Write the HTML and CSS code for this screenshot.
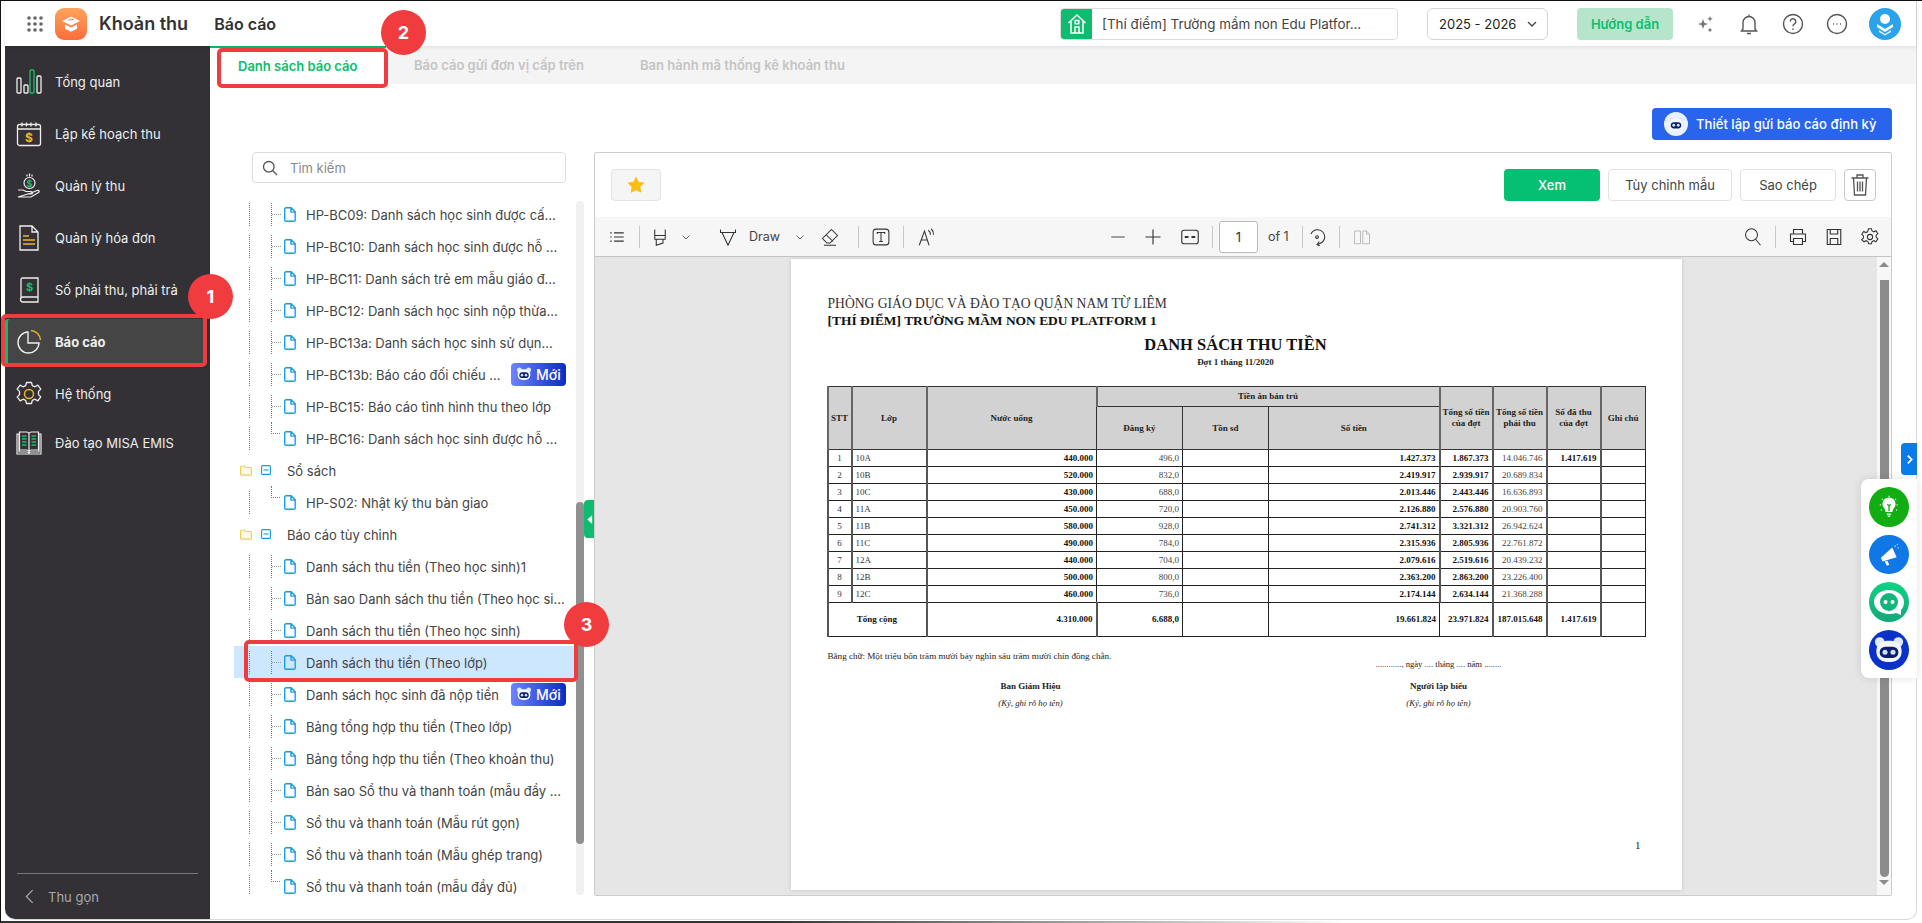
FILE: index.html
```html
<!DOCTYPE html>
<html lang="vi">
<head>
    <meta charset="UTF-8">
    <meta name="viewport" content="width=device-width, initial-scale=1.0">
    <title>Khoản thu - Báo cáo</title>
    <link rel="stylesheet" href="styles.css">
</head>
<body>
<svg class="sprite" width="0" height="0">
    <defs>
        <symbol id="ic-file" viewBox="0 0 12 15">
            <path d="M2 .8h5.2l4 4V13a1.3 1.3 0 0 1-1.3 1.3H2A1.3 1.3 0 0 1 .7 13V2.1A1.3 1.3 0 0 1 2 .8zM7 .8v4.3h4.2" fill="none" stroke="#1a9bea" stroke-width="1.4" stroke-linejoin="round"/>
        </symbol>
        <symbol id="ic-folder" viewBox="0 0 12 11">
            <path d="M.6 2A1 1 0 0 1 1.6 1h2.8l1.3 1.5h4.7a1 1 0 0 1 1 1v5.6a1 1 0 0 1-1 1H1.6a1 1 0 0 1-1-1z" fill="#fff8e6" stroke="#f5c95c" stroke-width="1.1"/>
        </symbol>
        <symbol id="ic-minus" viewBox="0 0 10 10">
            <rect x=".6" y=".6" width="8.8" height="8.8" rx="1" fill="none" stroke="#1a9bea" stroke-width="1.1"/>
            <path d="M2.5 5h5" stroke="#1a9bea" stroke-width="1.1"/>
        </symbol>
        <symbol id="ic-robot" viewBox="0 0 24 24">
            <circle cx="5" cy="6" r="3.6" fill="#dfe8ff"/>
            <circle cx="19" cy="6" r="3.6" fill="#dfe8ff"/>
            <rect x="2.5" y="5" width="19" height="16" rx="7.5" fill="#f2f6ff"/>
            <rect x="5" y="9.5" width="14" height="8.5" rx="4.2" fill="#0d1d6b"/>
            <circle cx="9" cy="13.7" r="1.9" fill="#cfe0ff"/>
            <circle cx="15" cy="13.7" r="1.9" fill="#cfe0ff"/>
        </symbol>
        <symbol id="ic-chev" viewBox="0 0 12 12">
            <path d="M2.5 4.5 6 8l3.5-3.5" fill="none" stroke="#666" stroke-width="1"/>
        </symbol>
    </defs>
</svg>

<div class="frame">
    <div class="app">
        <header class="topbar">
            <svg class="grid-ic" viewBox="0 0 16 16" fill="#666">
                <circle cx="2" cy="2" r="1.8"/><circle cx="8" cy="2" r="1.8"/><circle cx="14" cy="2" r="1.8"/>
                <circle cx="2" cy="8" r="1.8"/><circle cx="8" cy="8" r="1.8"/><circle cx="14" cy="8" r="1.8"/>
                <circle cx="2" cy="14" r="1.8"/><circle cx="8" cy="14" r="1.8"/><circle cx="14" cy="14" r="1.8"/>
            </svg>
            <svg class="logo" viewBox="0 0 32 32">
                <defs>
                    <linearGradient id="logo-grad" x1="0" y1="0" x2="0" y2="1">
                        <stop offset="0" stop-color="#ffa35c"/><stop offset="1" stop-color="#fb6d3a"/>
                    </linearGradient>
                </defs>
                <rect width="32" height="32" rx="9" fill="url(#logo-grad)"/>
                <path d="M16 8.5 25 13l-9 4.5L7 13z" fill="#fff"/>
                <path d="M10 16.5v4.2l6 3 6-3v-4.2l-6 3z" fill="#fff"/>
                <path d="M13.5 12.5l2-1.5 1 1 2-1" stroke="#fb6d3a" stroke-width="1" fill="none"/>
            </svg>
            <span class="app-name">Khoản thu</span>
            <span class="page-name">Báo cáo</span>

            <div class="school">
                <span class="school-ic">
                    <svg viewBox="0 0 20 22" width="20" height="22" fill="none" stroke="#fff" stroke-width="1.5">
                        <path d="M1.5 10 10 2l8.5 8M4 8v12h12V8M8 20v-6h4v6"/><rect x="8.2" y="7.5" width="3.6" height="3.2"/>
                    </svg>
                </span>
                <span class="school-name">[Thí điểm] Trường mầm non Edu Platfor...</span>
            </div>
            <div class="year">2025 - 2026
                <svg viewBox="0 0 12 12" width="12" height="12"><path d="M2 4l4 4 4-4" fill="none" stroke="#444" stroke-width="1.3"/></svg>
            </div>
            <button type="button" class="guide-btn">Hướng dẫn</button>

            <svg class="top-ic" viewBox="0 0 24 24" fill="#777">
                <path d="M10 7l1.300 3.700L15 12l-3.700 1.300L10 17l-1.300-3.700L5 12l3.700-1.300z"/>
                <path d="M17 4l.8 2 2 .8-2 .8-.8 2-.8-2-2-.8 2-.8zM17 15.500l.8 1.700 1.700.8-1.700.8-.8 1.700-.8-1.700-1.700-.8 1.700-.8z"/>
            </svg>
            <svg class="top-ic" viewBox="0 0 24 24" fill="none" stroke="#555" stroke-width="1.4">
                <path d="M6 17V10.500a6 6 0 0 1 12 0V17l1.500 2h-15zM12 2.500v2M10 21.500h4"/>
            </svg>
            <svg class="top-ic" viewBox="0 0 24 24" fill="none" stroke="#555" stroke-width="1.4">
                <circle cx="12" cy="12" r="9.5"/><path d="M9.200 9.500a2.800 2.800 0 1 1 4.300 2.400c-1 .6-1.500 1.200-1.500 2.400M12 16.400v1.600"/>
            </svg>
            <svg class="top-ic" viewBox="0 0 24 24" fill="none" stroke="#555" stroke-width="1.4">
                <circle cx="12" cy="12" r="9.5"/><path d="M8 12h1M11.500 12h1M15 12h1" stroke-width="1.6"/>
            </svg>
            <svg class="avatar" viewBox="0 0 32 32">
                <circle cx="16" cy="16" r="16" fill="#2aa3ea"/>
                <circle cx="16" cy="11" r="5" fill="#fff"/>
                <path d="M8 16l8 5 8-5v3l-8 5-8-5z" fill="#fff"/>
                <path d="M10 22l6 4 6-4v2l-6 3.500-6-3.500z" fill="#dff2ff"/>
            </svg>
        </header>

        <div class="main">
            <nav class="sidebar">
                <a class="nav-item">
                    <svg class="nav-ic" viewBox="0 0 26 26" fill="none" stroke="#eee" stroke-width="1.3">
                        <rect x="1" y="9" width="4" height="15" rx="1"/><rect x="8" y="16" width="4" height="8" rx="1"/>
                        <rect x="14" y="1" width="4" height="23" rx="1" stroke="#13c26b"/><rect x="21" y="7" width="4" height="17" rx="1"/>
                    </svg>
                    Tổng quan
                </a>
                <a class="nav-item">
                    <svg class="nav-ic" viewBox="0 0 26 26" fill="none" stroke="#eee" stroke-width="1.3">
                        <rect x="1.5" y="3.5" width="23" height="21" rx="2"/>
                        <path d="M1.500 8h23M6 1.500v4M10.500 1.500v4M15 1.500v4M20 1.500v4"/>
                        <text x="13" y="21" text-anchor="middle" font-family="Inter" font-size="12" font-weight="700" fill="#f0b429" stroke="none">$</text>
                    </svg>
                    Lập kế hoạch thu
                </a>
                <a class="nav-item">
                    <svg class="nav-ic" viewBox="0 0 26 26" fill="none" stroke="#eee" stroke-width="1.2">
                        <circle cx="13.5" cy="10" r="5.5"/>
                        <path d="M11 1.500v2M13.500 .5v3M16 1.500v2M2 17h5l3 1.500h5c2 0 2 2.500 0 2.500h-4M15 20l6-2.500c2-.7 3 1 1.500 2L15 24H2z"/>
                        <text x="13.5" y="13.5" text-anchor="middle" font-family="Inter" font-size="9" font-weight="700" fill="#13c26b" stroke="none">$</text>
                    </svg>
                    Quản lý thu
                </a>
                <a class="nav-item">
                    <svg class="nav-ic" viewBox="0 0 26 26" fill="none" stroke="#eee" stroke-width="1.3">
                        <path d="M4 1h12l6 6v18H4zM16 1v6h6"/>
                        <path d="M7 11h6M7 15h12M7 19h12" stroke="#f0b429" stroke-width="1.5"/>
                    </svg>
                    Quản lý hóa đơn
                </a>
                <a class="nav-item">
                    <svg class="nav-ic" viewBox="0 0 26 26" fill="none" stroke="#eee" stroke-width="1.3">
                        <path d="M5 20V2.500A1.500 1.500 0 0 1 6.500 1H22v19H7a2.500 2.500 0 0 0 0 5h15v-5"/>
                        <text x="13.5" y="14" text-anchor="middle" font-family="Inter" font-size="11" font-weight="700" fill="#13c26b" stroke="none">$</text>
                    </svg>
                    Số phải thu, phải trả
                </a>
                <a class="nav-item active">
                    <svg class="nav-ic" viewBox="0 0 26 26" fill="none" stroke="#eee" stroke-width="1.4">
                        <path d="M12 3a10.500 10.500 0 1 0 11 11H12z"/>
                        <path d="M15 1.500A10 10 0 0 1 24.500 11" stroke="#f0b429"/>
                    </svg>
                    Báo cáo
                </a>
                <a class="nav-item">
                    <svg class="nav-ic" viewBox="0 0 26 26" fill="none" stroke="#eee" stroke-width="1.3">
                        <path d="M10.500 1.500h5l.8 3.200 2.600 1.100 2.900-1.700 3 4-2.300 2.300v3.200l2.300 2.300-3 4-2.900-1.700-2.600 1.100-.8 3.200h-5l-.8-3.200-2.600-1.100-2.900 1.700-3-4 2.300-2.300v-3.200L1.100 8.100l3-4 2.900 1.700 2.600-1.100z" stroke-linejoin="round"/>
                        <circle cx="13" cy="13" r="4.5" stroke="#f0b429" stroke-width="1.5"/>
                    </svg>
                    Hệ thống
                </a>
                <a class="nav-item training">
                    <svg class="nav-ic" viewBox="0 0 26 26" fill="none" stroke="#eee" stroke-width="1.2">
                        <path d="M1 4h2v18h8c1 0 2 .5 2 1.500 0-1 1-1.500 2-1.500h8V4h2v20H1zM3.500 20V2h7c1.500 0 2.500 1 2.500 2 0-1 1-2 2.500-2h7v18h-7c-1 0-2 .5-2.500 1.500-.5-1-1.500-1.500-2.500-1.500zM13 4v17"/>
                        <path d="M6 6h4.500M6 9h4.500M6 12h4.500M6 15h4.500M15.500 6H20M15.500 9H20M15.500 12H20M15.500 15H20" stroke="#13c26b" stroke-width="1.4"/>
                    </svg>
                    Đào tạo MISA EMIS
                </a>
                <div class="collapse">
                    <svg viewBox="0 0 10 16" width="9" height="15"><path d="M8.500 1 1.500 8l7 7" fill="none" stroke="#aaa" stroke-width="1.3"/></svg>
                    Thu gọn
                </div>
            </nav>

            <section class="content">
                <div class="tabs">
                    <div class="tab active">Danh sách báo cáo</div>
                    <div class="tab">Báo cáo gửi đơn vị cấp trên</div>
                    <div class="tab">Ban hành mã thống kê khoản thu</div>
                </div>

                <div class="actions">
                    <button type="button" class="schedule-btn">
                        <span class="schedule-ic"><svg viewBox="0 0 24 24" width="18" height="18"><use href="#ic-robot"/></svg></span>
                        Thiết lập gửi báo cáo định kỳ
                    </button>
                </div>

                <div class="split">
                    <div class="tree-col">
                        <div class="search">
                            <svg viewBox="0 0 16 16" width="16" height="16" fill="none" stroke="#555" stroke-width="1.3"><circle cx="6.8" cy="6.8" r="5.3"/><path d="M10.800 10.800 15 15"/></svg>
                            <span>Tìm kiếm</span>
                        </div>
                        <div class="tree-wrap">
                            <div class="tree">
                                <div class="row"><i class="guide"></i><i class="guide branch"></i><svg class="file"><use href="#ic-file"/></svg><span>HP-BC09: Danh sách học sinh được cấ...</span></div>
                                <div class="row"><i class="guide"></i><i class="guide branch"></i><svg class="file"><use href="#ic-file"/></svg><span>HP-BC10: Danh sách học sinh được hỗ ...</span></div>
                                <div class="row"><i class="guide"></i><i class="guide branch"></i><svg class="file"><use href="#ic-file"/></svg><span>HP-BC11: Danh sách trẻ em mẫu giáo đ...</span></div>
                                <div class="row"><i class="guide"></i><i class="guide branch"></i><svg class="file"><use href="#ic-file"/></svg><span>HP-BC12: Danh sách học sinh nộp thừa...</span></div>
                                <div class="row"><i class="guide"></i><i class="guide branch"></i><svg class="file"><use href="#ic-file"/></svg><span>HP-BC13a: Danh sách học sinh sử dụn...</span></div>
                                <div class="row"><i class="guide"></i><i class="guide branch"></i><svg class="file"><use href="#ic-file"/></svg><span>HP-BC13b: Báo cáo đối chiếu ...</span><b class="new"><svg viewBox="0 0 24 24" width="16" height="16"><use href="#ic-robot"/></svg>Mới</b></div>
                                <div class="row"><i class="guide"></i><i class="guide branch"></i><svg class="file"><use href="#ic-file"/></svg><span>HP-BC15: Báo cáo tình hình thu theo lớp</span></div>
                                <div class="row"><i class="guide"></i><i class="guide branch last"></i><svg class="file"><use href="#ic-file"/></svg><span>HP-BC16: Danh sách học sinh được hỗ ...</span></div>
                                <div class="row folder"><svg class="folder-ic"><use href="#ic-folder"/></svg><svg class="minus-ic"><use href="#ic-minus"/></svg><span>Sổ sách</span></div>
                                <div class="row"><i class="guide"></i><i class="guide branch last"></i><svg class="file"><use href="#ic-file"/></svg><span>HP-S02: Nhật ký thu bàn giao</span></div>
                                <div class="row folder"><svg class="folder-ic"><use href="#ic-folder"/></svg><svg class="minus-ic"><use href="#ic-minus"/></svg><span>Báo cáo tùy chỉnh</span></div>
                                <div class="row"><i class="guide"></i><i class="guide branch"></i><svg class="file"><use href="#ic-file"/></svg><span>Danh sách thu tiền (Theo học sinh)1</span></div>
                                <div class="row"><i class="guide"></i><i class="guide branch"></i><svg class="file"><use href="#ic-file"/></svg><span>Bản sao Danh sách thu tiền (Theo học si...</span></div>
                                <div class="row"><i class="guide"></i><i class="guide branch"></i><svg class="file"><use href="#ic-file"/></svg><span>Danh sách thu tiền (Theo học sinh)</span></div>
                                <div class="row selected"><i class="guide"></i><i class="guide branch"></i><svg class="file"><use href="#ic-file"/></svg><span>Danh sách thu tiền (Theo lớp)</span></div>
                                <div class="row"><i class="guide"></i><i class="guide branch"></i><svg class="file"><use href="#ic-file"/></svg><span>Danh sách học sinh đã nộp tiền</span><b class="new"><svg viewBox="0 0 24 24" width="16" height="16"><use href="#ic-robot"/></svg>Mới</b></div>
                                <div class="row"><i class="guide"></i><i class="guide branch"></i><svg class="file"><use href="#ic-file"/></svg><span>Bảng tổng hợp thu tiền (Theo lớp)</span></div>
                                <div class="row"><i class="guide"></i><i class="guide branch"></i><svg class="file"><use href="#ic-file"/></svg><span>Bảng tổng hợp thu tiền (Theo khoản thu)</span></div>
                                <div class="row"><i class="guide"></i><i class="guide branch"></i><svg class="file"><use href="#ic-file"/></svg><span>Bản sao Sổ thu và thanh toán (mẫu đầy ...</span></div>
                                <div class="row"><i class="guide"></i><i class="guide branch"></i><svg class="file"><use href="#ic-file"/></svg><span>Sổ thu và thanh toán (Mẫu rút gọn)</span></div>
                                <div class="row"><i class="guide"></i><i class="guide branch"></i><svg class="file"><use href="#ic-file"/></svg><span>Sổ thu và thanh toán (Mẫu ghép trang)</span></div>
                                <div class="row"><i class="guide"></i><i class="guide branch last"></i><svg class="file"><use href="#ic-file"/></svg><span>Sổ thu và thanh toán (mẫu đầy đủ)</span></div>
                            </div>
                            <div class="tree-scroll"><div class="tree-thumb"></div></div>
                        </div>
                    </div>

                    <div class="panel">
                        <div class="panel-head">
                            <button type="button" class="star-btn">
                                <svg viewBox="0 0 20 20" width="18" height="18"><path d="M10 1.500l2.700 5.400 5.900.9-4.300 4.200 1 5.900L10 15.200 4.700 18l1-5.900L1.400 7.800l5.900-.9z" fill="#fdbd13" stroke="#fdbd13" stroke-linejoin="round"/></svg>
                            </button>
                            <button type="button" class="btn green">Xem</button>
                            <button type="button" class="btn">Tùy chỉnh mẫu</button>
                            <button type="button" class="btn">Sao chép</button>
                            <button type="button" class="btn trash">
                                <svg viewBox="0 0 20 24" width="20" height="24" fill="none" stroke="#555" stroke-width="1.3"><path d="M1.500 5h17M7 5V2h6v3M3.500 5l1 17h11l1-17M7.500 8.500v10M10 8.500v10M12.500 8.500v10"/></svg>
                            </button>
                        </div>

                        <div class="pdf-bar">
                            <svg class="tb ml-10" viewBox="0 0 24 24" fill="none" stroke="#333" stroke-width="1.5"><path d="M8 6.500h13M8 12h13M8 17.500h13M3 6.500h2M3 12h2M3 17.500h2"/></svg>
                            <i class="tb-sep"></i>
                            <svg class="tb ml-8" viewBox="0 0 24 24" fill="none" stroke="#333" stroke-width="1.4"><path d="M5 2v8h14V2M5 10v5h14v-5M7 15v8l9-3v-5"/></svg>
                            <svg class="tb-chev ml-8"><use href="#ic-chev"/></svg>
                            <svg class="tb ml-24" viewBox="0 0 24 24" fill="none" stroke="#333" stroke-width="1.4"><path d="M2 2v4h20V2M4 6l8 17 8-17"/></svg>
                            <span class="tb-text">Draw</span>
                            <svg class="tb-chev ml-14"><use href="#ic-chev"/></svg>
                            <svg class="tb ml-12" viewBox="0 0 24 24" fill="none" stroke="#333" stroke-width="1.4"><path d="M14 2l8 8-10 10H8l-6-6zM7 9l9 9M4 23h16"/></svg>
                            <i class="tb-sep ml-16"></i>
                            <svg class="tb ml-10" viewBox="0 0 24 24" fill="none" stroke="#333" stroke-width="1.4"><rect x="1.5" y="1.5" width="21" height="21" rx="4"/><path d="M7 8V6h10v2M12 6v12M9.500 18h5"/></svg>
                            <i class="tb-sep"></i>
                            <svg class="tb ml-10" viewBox="0 0 24 24" fill="none" stroke="#333" stroke-width="1.4"><path d="M3 23 10 4l6 19M6 16h8M15 3a7 7 0 0 1 3 6M19 1a10 10 0 0 1 3 8"/></svg>

                            <svg class="tb ml-168" viewBox="0 0 24 24" fill="none" stroke="#999" stroke-width="2.5"><path d="M3 12h18"/></svg>
                            <svg class="tb ml-11" viewBox="0 0 24 24" fill="none" stroke="#333" stroke-width="1.5"><path d="M2 12h20M12 2v20"/></svg>
                            <svg class="tb ml-13" viewBox="0 0 24 24" fill="none" stroke="#333" stroke-width="1.5"><rect x="1" y="3" width="22" height="18" rx="3"/><path d="M5 12h5M14 12h5" stroke-width="2.5"/></svg>
                            <i class="tb-sep"></i>
                            <span class="page-input">1</span>
                            <span class="tb-text ml-10">of 1</span>
                            <i class="tb-sep ml-13"></i>
                            <svg class="tb ml-2" viewBox="0 0 24 24" fill="none" stroke="#333" stroke-width="1.4"><path d="M4 8a9.500 9.500 0 1 1 11 13l-3 1M15 18l-3 4 4 2"/><circle cx="12" cy="12" r="1.8"/></svg>
                            <i class="tb-sep"></i>
                            <svg class="tb ml-10" viewBox="0 0 24 24" fill="none" stroke="#bbb" stroke-width="1.3"><path d="M2 4h8v17H2zM13 4h5l4 4v13h-9zM18 4v4h4"/></svg>

                            <div class="tb-right">
                                <svg class="tb" viewBox="0 0 24 24" fill="none" stroke="#333" stroke-width="1.4"><circle cx="10" cy="9" r="8"/><path d="M15.500 15l6.500 8"/></svg>
                                <i class="tb-sep"></i>
                                <svg class="tb ml-10" viewBox="0 0 24 24" fill="none" stroke="#333" stroke-width="1.5"><path d="M6 8V2h12v6M6 18H2V8h20v10h-4M6 14h12v8H6z"/></svg>
                                <svg class="tb ml-12" viewBox="0 0 24 24" fill="none" stroke="#333" stroke-width="1.5"><path d="M3 2h18v20H3zM7 2v6h10V2M7 22v-8h10v8"/></svg>
                                <svg class="tb ml-12" viewBox="0 0 24 24" fill="none" stroke="#333" stroke-width="1.4"><path d="M10 1h4l.7 3 2.500 1.100 2.700-1.500 2.600 3.900-2.300 2v3l2.300 2-2.600 3.900-2.700-1.500-2.500 1.100-.7 3h-4l-.7-3-2.500-1.100-2.700 1.500L1 15.500l2.300-2v-3L1 8.500l2.600-3.900 2.700 1.500L8.800 5z"/><circle cx="12" cy="12" r="3.5"/></svg>
                            </div>
                        </div>

                        <div class="pdf-view">
                            <div class="pdf-area">
                                <article class="doc">
                                    <p class="doc-org">PHÒNG GIÁO DỤC VÀ ĐÀO TẠO QUẬN NAM TỪ LIÊM</p>
                                    <p class="doc-org doc-school">[THÍ ĐIỂM] TRƯỜNG MẦM NON EDU PLATFORM 1</p>
                                    <h1 class="doc-title">DANH SÁCH THU TIỀN</h1>
                                    <p class="doc-sub">Đợt 1 tháng 11/2020</p>
                                    <table class="doc-table">
                                        <colgroup>
                                            <col class="c-stt"><col class="c-lop"><col class="c-nuoc"><col class="c-dk"><col class="c-ton"><col class="c-tien"><col class="c-tong"><col class="c-phai"><col class="c-thu"><col>
                                        </colgroup>
                                        <thead>
                                            <tr class="h1">
                                                <th rowspan="2">STT</th><th rowspan="2">Lớp</th><th rowspan="2">Nước uống</th>
                                                <th colspan="3">Tiền ăn bán trú</th>
                                                <th rowspan="2">Tổng số tiền của đợt</th><th rowspan="2">Tổng số tiền phải thu</th><th rowspan="2">Số đã thu của đợt</th><th rowspan="2">Ghi chú</th>
                                            </tr>
                                            <tr class="h2"><th>Đăng ký</th><th>Tồn sd</th><th>Số tiền</th></tr>
                                        </thead>
                                        <tbody>
                                            <tr><td class="ct">1</td><td>10A</td><td class="b">440.000</td><td class="r">496,0</td><td></td><td class="b">1.427.373</td><td class="b">1.867.373</td><td class="r">14.046.746</td><td class="b">1.417.619</td><td></td></tr>
                                            <tr><td class="ct">2</td><td>10B</td><td class="b">520.000</td><td class="r">832,0</td><td></td><td class="b">2.419.917</td><td class="b">2.939.917</td><td class="r">20.689.834</td><td></td><td></td></tr>
                                            <tr><td class="ct">3</td><td>10C</td><td class="b">430.000</td><td class="r">688,0</td><td></td><td class="b">2.013.446</td><td class="b">2.443.446</td><td class="r">16.636.893</td><td></td><td></td></tr>
                                            <tr><td class="ct">4</td><td>11A</td><td class="b">450.000</td><td class="r">720,0</td><td></td><td class="b">2.126.880</td><td class="b">2.576.880</td><td class="r">20.903.760</td><td></td><td></td></tr>
                                            <tr><td class="ct">5</td><td>11B</td><td class="b">580.000</td><td class="r">928,0</td><td></td><td class="b">2.741.312</td><td class="b">3.321.312</td><td class="r">26.942.624</td><td></td><td></td></tr>
                                            <tr><td class="ct">6</td><td>11C</td><td class="b">490.000</td><td class="r">784,0</td><td></td><td class="b">2.315.936</td><td class="b">2.805.936</td><td class="r">22.761.872</td><td></td><td></td></tr>
                                            <tr><td class="ct">7</td><td>12A</td><td class="b">440.000</td><td class="r">704,0</td><td></td><td class="b">2.079.616</td><td class="b">2.519.616</td><td class="r">20.439.232</td><td></td><td></td></tr>
                                            <tr><td class="ct">8</td><td>12B</td><td class="b">500.000</td><td class="r">800,0</td><td></td><td class="b">2.363.200</td><td class="b">2.863.200</td><td class="r">23.226.400</td><td></td><td></td></tr>
                                            <tr><td class="ct">9</td><td>12C</td><td class="b">460.000</td><td class="r">736,0</td><td></td><td class="b">2.174.144</td><td class="b">2.634.144</td><td class="r">21.368.288</td><td></td><td></td></tr>
                                            <tr class="total"><td colspan="2" class="ct strong">Tổng cộng</td><td class="b">4.310.000</td><td class="b">6.688,0</td><td></td><td class="b">19.661.824</td><td class="b">23.971.824</td><td class="b">187.015.648</td><td class="b">1.417.619</td><td></td></tr>
                                        </tbody>
                                    </table>
                                    <p class="doc-words">Bằng chữ: Một triệu bốn trăm mười bảy nghìn sáu trăm mười chín đồng chẵn.</p>
                                    <div class="doc-sign">
                                        <span></span><span class="sign-date">............, ngày .... tháng .... năm ........</span>
                                        <strong>Ban Giám Hiệu</strong><strong>Người lập biểu</strong>
                                        <em>(Ký, ghi rõ họ tên)</em><em>(Ký, ghi rõ họ tên)</em>
                                    </div>
                                    <p class="doc-num">1</p>
                                </article>
                            </div>
                            <div class="pdf-scroll">
                                <i class="arrow up"></i>
                                <div class="pdf-thumb"></div>
                                <i class="arrow"></i>
                            </div>
                        </div>
                    </div>
                </div>
            </section>
        </div>
    </div>

    <!-- cac lop phu: nut thu gon, thanh tien ich, danh dau do -->
    <div class="tree-handle"><svg viewBox="0 0 8 12" width="7" height="11"><path d="M7 1 1.500 6 7 11z" fill="#fff"/></svg></div>
    <div class="side-handle"><svg viewBox="0 0 8 12" width="7" height="11"><path d="M2 1.500 6.500 6 2 10.500" fill="none" stroke="#fff" stroke-width="2"/></svg></div>
    <div class="widgets">
        <span class="widget w-green">
            <svg viewBox="0 0 24 24" width="26" height="26" fill="none" stroke="#fff" stroke-width="1.2"><path d="M8 13a5.500 5.500 0 1 1 8 0c-1 1-1.300 2-1.300 3h-5.400c0-1-.3-2-1.300-3z" fill="#fff"/><path d="M10 18.500h4M10.800 20.500h2.400"/><path d="M12 16v-5M12 11l-1.500-1.500M12 11l1.500-1.500" stroke="#12ad12"/><path d="M12 1.500v1.500M3.500 10H5M19 10h1.500M5.500 4.500l1 1M18.500 4.500l-1 1M4.500 15l1-.6M19.500 15l-1-.6" stroke-dasharray="1 1"/></svg>
        </span>
        <span class="widget w-blue">
            <svg viewBox="0 0 24 24" width="26" height="26" fill="#fff"><path d="M15 5l4 9-13 4-1.500-3.500zM8 18l2.500-.8 1.800 3.800-2.200 1zM17 3.500l.8-.4.5 1-.8.4zM20 5l.9-.2.2 1-.9.2zM19 2l.7-.5.5.7-.7.5z"/></svg>
        </span>
        <span class="widget w-chat">
            <svg viewBox="0 0 40 40" width="40" height="40"><path d="M20 8c9 0 15 6 15 12 0 3-1 6-3 8v5l-5-2c-2 .8-4.500 1-7 1-8 0-15-5-15-12S11 8 20 8z" fill="#fff"/><circle cx="20" cy="20" r="9" fill="#12b57a"/><circle cx="16.5" cy="20" r="2" fill="#fff"/><circle cx="23.5" cy="20" r="2" fill="#fff"/></svg>
        </span>
        <span class="widget w-robot"><svg viewBox="0 0 24 24" width="32" height="32"><use href="#ic-robot"/></svg></span>
    </div>

    <i class="mark box-side"></i>
    <i class="mark box-tab"></i>
    <i class="mark box-row"></i>
    <b class="badge b-1">1</b>
    <b class="badge b-2">2</b>
    <b class="badge b-3">3</b>
</div>
</body>
</html>
```

FILE: styles.css
```css
*{
    margin: 0;
    padding: 0;
    box-sizing: border-box;
}
body{
    background-color: #fff;
    font-family: "Inter", "Noto Sans", sans-serif;
    font-size: 13px;
    color: #333;
    overflow: hidden;
}
.sprite{
    position: absolute;
}
button{
    font-family: inherit;
    cursor: pointer;
}
.frame{
    position: relative;
    width: 1922px;
    height: 923px;
    padding: 1px 5px 3px 5px;
    box-shadow: inset 1px 1px 0 #111;
    background: linear-gradient(90deg, #333 0 40%, #fff 70%) bottom / 100% 2px no-repeat;
}
.app{
    display: flex;
    flex-direction: column;
    height: 100%;
    background-color: #fff;
    border-right: 1px solid #d8d8d8;
    border-bottom: 1px solid #d8d8d8;
    border-radius: 8px 0 10px 10px;
}

/* top bar */
.topbar{
    display: flex;
    align-items: center;
    flex: 0 0 45px;
    padding: 0 15px 0 22px;
    position: relative;
    z-index: 2;
    box-shadow: 0 1px 4px rgba(0,0,0,.1);
    background-color: #fff;
}
.grid-ic{
    width: 16px;
    height: 16px;
}
.logo{
    width: 32px;
    height: 32px;
    margin-left: 12px;
}
.app-name{
    margin-left: 12px;
    font-size: 18px;
    font-weight: 600;
    color: #333;
}
.page-name{
    margin-left: 26px;
    font-size: 16px;
    font-weight: 600;
    color: #333;
}
.school{
    display: flex;
    align-items: center;
    width: 338px;
    height: 32px;
    margin-left: auto;
    border: 1px solid #ddd;
    border-radius: 4px;
    overflow: hidden;
}
.school-ic{
    display: flex;
    align-items: center;
    justify-content: center;
    width: 31px;
    height: 100%;
    background-color: #0fbb6e;
}
.school-name{
    margin-left: 10px;
    font-size: 13.4px;
    color: #444;
    white-space: nowrap;
}
.year{
    display: flex;
    align-items: center;
    justify-content: space-between;
    width: 121px;
    height: 32px;
    margin-left: 29px;
    padding: 0 9px 0 11px;
    border: 1px solid #d5d5d5;
    border-radius: 6px;
    font-size: 13px;
    color: #222;
}
.guide-btn{
    width: 96px;
    height: 32px;
    margin: 0 20px 0 29px;
    border: 0;
    border-radius: 4px;
    background-color: #b7e5cc;
    color: #0bbf6c;
    font-size: 13px;
    font-weight: 600;
}
.top-ic{
    width: 24px;
    height: 24px;
    margin-right: 20px;
}
.avatar{
    width: 32px;
    height: 32px;
}

/* sidebar */
.main{
    display: flex;
    flex: 1;
    min-height: 0;
}
.sidebar{
    display: flex;
    flex-direction: column;
    flex: 0 0 205px;
    padding-top: 10px;
    background-color: #333135;
    border-radius: 0 0 0 10px;
    color: #eee;
}
.nav-item{
    display: flex;
    align-items: center;
    gap: 13px;
    height: 46px;
    margin: 3px 5px 3px 0;
    padding-left: 11px;
    border-radius: 3px;
    font-size: 13px;
    white-space: nowrap;
}
.nav-item.active{
    background-color: #454545;
    box-shadow: inset 3px 0 0 #0fbb6e;
    font-weight: 700;
}
.nav-item.training{
    margin-top: 0;
}
.nav-ic{
    flex: 0 0 26px;
    width: 26px;
    height: 26px;
}
.collapse{
    display: flex;
    align-items: center;
    gap: 14px;
    margin: auto 12px 0 12px;
    height: 46px;
    padding-left: 8px;
    border-top: 1px solid #777;
    color: #aaa;
}

/* tabs */
.content{
    display: flex;
    flex-direction: column;
    flex: 1;
    min-width: 0;
}
.tabs{
    display: flex;
    height: 38px;
    background-color: #f4f4f4;
}
.tab{
    padding: 0 28px;
    line-height: 38px;
    font-weight: 600;
    color: #c4c4c4;
    white-space: nowrap;
}
.tab.active{
    width: 176px;
    background-color: #fff;
    border-top: 2px solid #0bbf6c;
    line-height: 36px;
    color: #0bbf6c;
}
.actions{
    display: flex;
    justify-content: flex-end;
    padding: 24px 24px 12px 0;
}
.schedule-btn{
    display: flex;
    align-items: center;
    gap: 8px;
    width: 240px;
    height: 32px;
    padding-left: 12px;
    border: 0;
    border-radius: 4px;
    background-color: #2864ec;
    color: #fff;
    font-size: 13.1px;
    font-weight: 500;
}
.schedule-ic{
    display: flex;
    align-items: center;
    justify-content: center;
    width: 24px;
    height: 24px;
    border-radius: 50%;
    background-color: #eaf2ff;
}
.split{
    display: flex;
    flex: 1;
    min-height: 0;
    padding: 0 24px 24px 24px;
}

/* report tree */
.tree-col{
    flex: 0 0 360px;
    display: flex;
    flex-direction: column;
}
.search{
    display: flex;
    align-items: center;
    gap: 12px;
    width: 314px;
    height: 32px;
    margin-left: 18px;
    padding-left: 9px;
    border: 1px solid #ddd;
    border-radius: 4px;
    color: #8a8a8a;
}
.tree-wrap{
    display: flex;
    height: 697px;
    margin-top: 15px;
}
.tree{
    width: 342px;
    overflow: hidden;
}
.row{
    display: flex;
    align-items: center;
    height: 32px;
    padding-left: 15px;
    white-space: nowrap;
    color: #444;
    font-size: 13px;
}
.row span{
    padding-top: 2px;
}
.row.selected{
    background-color: #cce7ff;
}
.guide{
    flex: 0 0 22px;
    height: 23px;
    border-left: 1px dotted #777;
}
.guide.branch{
    flex-basis: 13px;
    background: repeating-linear-gradient(90deg, #999 0 1px, transparent 1px 2px) 0 50% / 9px 1px no-repeat;
}
.guide.branch.last{
    flex-basis: 9px;
    height: 12px;
    margin-right: 4px;
    align-self: flex-start;
    background: none;
    border-bottom: 1px dotted #777;
}
.file{
    flex: 0 0 12px;
    width: 12px;
    height: 15px;
    margin-right: 10px;
}
.row.folder{
    padding-left: 6px;
}
.folder-ic{
    width: 12px;
    height: 11px;
    margin-right: 9px;
}
.minus-ic{
    width: 10px;
    height: 10px;
    margin-right: 16px;
}
.new{
    display: flex;
    align-items: center;
    gap: 4px;
    width: 55px;
    height: 23px;
    margin-left: auto;
    margin-right: 10px;
    padding-left: 5px;
    border-radius: 4px;
    background: linear-gradient(90deg, #6f83ff, #0a2cc0);
    color: #fff;
    font-size: 14px;
    font-weight: 500;
}
.tree-scroll{
    width: 8px;
    height: 694px;
    margin-top: 3px;
    background-color: #f1f1f1;
    border-radius: 4px;
}
.tree-thumb{
    width: 8px;
    height: 342px;
    margin-top: 301px;
    background-color: #909090;
    border-radius: 4px;
}

/* report panel */
.panel{
    display: flex;
    flex-direction: column;
    flex: 1;
    min-width: 0;
    height: 744px;
    border: 1px solid #ccc;
    border-radius: 2px;
}
.panel-head{
    display: flex;
    align-items: center;
    gap: 8px;
    flex: 0 0 64px;
    padding: 0 15px 0 16px;
}
.star-btn{
    display: flex;
    align-items: center;
    justify-content: center;
    width: 50px;
    height: 32px;
    margin-right: auto;
    border: 1px solid #e4e4e4;
    border-radius: 4px;
    background-color: #f5f5f5;
}
.btn{
    width: 96px;
    height: 32px;
    border: 1px solid #e2e2e2;
    border-radius: 4px;
    background-color: #fff;
    color: #444;
    font-size: 13px;
}
.btn:nth-of-type(3){
    width: 124px;
}
.btn.green{
    border: 0;
    background-color: #05c073;
    color: #fff;
    font-weight: 500;
}
.btn.trash{
    display: flex;
    align-items: center;
    justify-content: center;
    width: 32px;
    border-color: #c8c8c8;
}
.pdf-bar{
    display: flex;
    align-items: center;
    flex: 0 0 40px;
    background-color: #f6f6f6;
    border-bottom: 1px solid #c4c4c4;
}
.tb{
    flex: 0 0 24px;
    width: 24px;
    height: 24px;
    padding: 3px;
}
.tb-chev{
    width: 12px;
    height: 12px;
}
.tb-sep{
    flex: 0 0 1px;
    height: 22px;
    margin-left: 10px;
    background-color: #c8c8c8;
}
.tb-text{
    margin-left: 9px;
    color: #444;
    font-size: 12.5px;
}
.ml-2{ margin-left: 2px; }
.ml-8{ margin-left: 8px; }
.ml-10{ margin-left: 10px; }
.ml-11{ margin-left: 11px; }
.ml-12{ margin-left: 12px; }
.ml-13{ margin-left: 13px; }
.ml-14{ margin-left: 14px; }
.ml-16{ margin-left: 16px; }
.ml-24{ margin-left: 24px; }
.ml-168{ margin-left: 168px; }
.page-input{
    width: 39px;
    height: 32px;
    margin-left: 6px;
    line-height: 30px;
    text-align: center;
    border: 1px solid #bbb;
    border-radius: 3px;
    background-color: #fff;
    color: #333;
}
.tb-right{
    display: flex;
    align-items: center;
    margin-left: auto;
    padding-right: 9px;
}

/* pdf preview */
.pdf-view{
    display: flex;
    flex: 1;
    min-height: 0;
}
.pdf-area{
    flex: 1;
    display: flex;
    justify-content: center;
    padding-top: 2px;
    background-color: #e6e6e6;
    overflow: hidden;
}
.doc{
    width: 891px;
    height: 631px;
    padding: 36px 38px 0 37px;
    background-color: #fff;
    box-shadow: 0 0 4px rgba(0,0,0,.15);
    font-family: "Liberation Serif", "Times New Roman", serif;
    color: #222;
}
.doc-org{
    font-size: 13.6px;
    line-height: 17px;
    color: #333;
}
.doc-school{
    font-size: 13.45px;
    font-weight: 700;
    color: #111;
}
.doc-title{
    margin-top: 6px;
    font-size: 16.5px;
    line-height: 20px;
    text-align: center;
    color: #111;
}
.doc-sub{
    margin-top: 1px;
    font-size: 9px;
    line-height: 12px;
    font-weight: 700;
    text-align: center;
}
.doc-table{
    width: 819px;
    margin-top: 18px;
    margin-left: -1px;
    table-layout: fixed;
    border-collapse: collapse;
    border: 1px solid #333;
    font-size: 9px;
    line-height: 11px;
}
.c-stt{ width: 24px; }
.c-lop{ width: 75px; }
.c-nuoc{ width: 170px; }
.c-dk{ width: 86px; }
.c-ton{ width: 86px; }
.c-tien{ width: 171px; }
.c-tong{ width: 53px; }
.c-phai{ width: 54px; }
.c-thu{ width: 54px; }
.doc-table th{
    background-color: #d2d2d2;
    border: 1px solid #333;
    border-left: 2px solid #666;
    padding: 0 2px;
    font-weight: 700;
    color: #222;
}
.doc-table .h1{
    height: 20px;
}
.doc-table .h2{
    height: 43px;
}
.doc-table .h2 th{
    border-left-width: 1px;
    border-left-color: #333;
}
.doc-table td{
    height: 17px;
    padding: 0 3px;
    border: 1px solid #222;
    border-left: 2px solid #555;
    text-align: left;
    color: #333;
}
.doc-table tbody tr td:nth-child(n+4):nth-child(-n+6){
    border-left: 1px solid #222;
}
.doc-table .ct{
    text-align: center;
}
.doc-table .strong{
    font-weight: 700;
    color: #111;
}
.doc-table .b{
    text-align: right;
    font-weight: 700;
    color: #111;
}
.doc-table .r{
    text-align: right;
    color: #444;
}
.doc-table .total td{
    height: 34px;
}
.doc-words{
    margin-top: 12px;
    font-size: 9.1px;
    line-height: 14px;
}
.doc-sign{
    display: grid;
    grid-template-columns: 1fr 1fr;
    row-gap: 10px;
    width: 816px;
    margin-top: -5px;
    margin-left: -1px;
    font-size: 9px;
    line-height: 12px;
    text-align: center;
}
.sign-date{
    font-size: 8.6px;
}
.doc-sign em{
    margin-top: -5px;
    font-size: 8.7px;
}
.doc-num{
    margin-top: 129px;
    padding-right: 3px;
    font-size: 11px;
    line-height: 14px;
    text-align: right;
}
.pdf-scroll{
    display: flex;
    flex-direction: column;
    align-items: center;
    flex: 0 0 14px;
    background-color: #f7f7f7;
}
.pdf-thumb{
    width: 9px;
    height: 597px;
    margin: 13px 0 3px;
    background-color: #8c8c8c;
    border-radius: 0 0 5px 5px;
}
.arrow{
    width: 0;
    height: 0;
    border-left: 5px solid transparent;
    border-right: 5px solid transparent;
    border-top: 5px solid #8c8c8c;
}
.arrow.up{
    margin-top: 5px;
    border-top: 0;
    border-bottom: 5px solid #8c8c8c;
}

/* overlays */
.tree-handle{
    position: absolute;
    left: 584px;
    top: 500px;
    display: flex;
    align-items: center;
    justify-content: center;
    width: 10px;
    height: 38px;
    border-radius: 4px 0 0 4px;
    background-color: #0fbb6e;
}
.side-handle{
    position: absolute;
    left: 1901px;
    top: 443px;
    display: flex;
    align-items: center;
    justify-content: center;
    width: 16px;
    height: 32px;
    border-radius: 4px 0 0 4px;
    background-color: #0a7be8;
}
.widgets{
    position: absolute;
    left: 1861px;
    top: 479px;
    display: flex;
    flex-direction: column;
    gap: 8px;
    width: 56px;
    height: 199px;
    padding: 8px;
    border-radius: 8px 0 0 8px;
    background-color: #fff;
    box-shadow: 0 0 10px rgba(0,0,0,.12);
}
.widget{
    display: flex;
    align-items: center;
    justify-content: center;
    width: 40px;
    height: 40px;
    border-radius: 50%;
}
.w-green{
    background-color: #12ad12;
}
.w-blue{
    background-color: #0f78e6;
}
.w-chat{
    background: linear-gradient(#10d283, #12a878);
}
.w-robot{
    background-color: #0a32c8;
}
.mark{
    position: absolute;
    z-index: 3;
    border: 4px solid #f13c3f;
    border-radius: 5px;
}
.box-side{
    left: 1px;
    top: 314px;
    width: 206px;
    height: 53px;
}
.box-tab{
    left: 217px;
    top: 48px;
    width: 171px;
    height: 40px;
}
.box-row{
    left: 244px;
    top: 640px;
    width: 334px;
    height: 42px;
}
.badge{
    position: absolute;
    z-index: 3;
    width: 45px;
    height: 45px;
    border-radius: 50%;
    background-color: #f13c3f;
    color: #fff;
    font-size: 18px;
    font-weight: 700;
    line-height: 45px;
    text-align: center;
}
.b-1{
    left: 188px;
    top: 274px;
}
.b-2{
    left: 381px;
    top: 10px;
}
.b-3{
    left: 564px;
    top: 602px;
}
```
